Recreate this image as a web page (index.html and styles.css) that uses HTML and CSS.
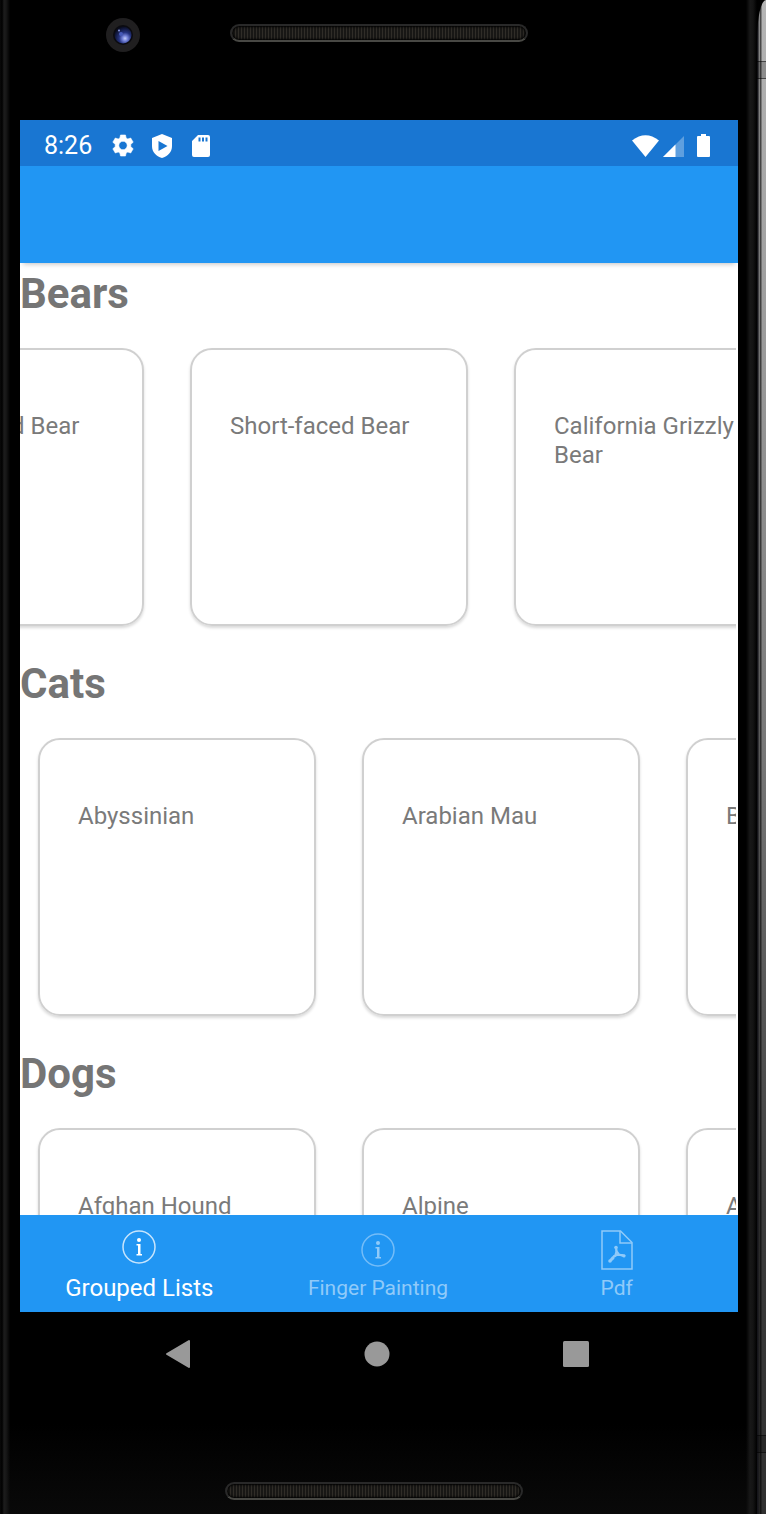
FILE: index.html
```html
<!DOCTYPE html>
<html lang="en">
<head>
<meta charset="utf-8">
<meta name="viewport" content="width=device-width, initial-scale=1">
<title>Grouped Lists</title>
<link rel="stylesheet" href="styles.css">
</head>
<body>
<div class="device">
  <div class="edge edge-left"></div>
  <div class="front">
    <div class="bezel-top">
      <svg class="camera" viewBox="0 0 34 34" aria-hidden="true">
        <defs>
          <radialGradient id="lens" cx="62%" cy="70%" r="70%">
            <stop offset="0" stop-color="#c3cdf8"/>
            <stop offset=".22" stop-color="#7482d8"/>
            <stop offset=".5" stop-color="#25337f"/>
            <stop offset="1" stop-color="#080b1c"/>
          </radialGradient>
        </defs>
        <circle cx="17" cy="17" r="17" fill="#201f20"/>
        <circle cx="17" cy="17" r="10" fill="#0b0b10"/>
        <circle cx="17" cy="17" r="8.500" fill="url(#lens)"/>
        <circle cx="15" cy="16" r="2" fill="#4659b8"/>
        <circle cx="13" cy="12.500" r="1" fill="#8e9ae0"/>
      </svg>
      <div class="speaker"></div>
    </div>
    <div class="screen">
      <div class="status">
        <span class="clock">8:26</span>
        <svg class="icon" viewBox="0 0 22 24" aria-hidden="true"><path fill="#fff" fill-rule="evenodd" stroke="#fff" stroke-width=".6" stroke-linejoin="round" d="M8.500 1h5l.6 3 1.700 1 2.900-1 2.500 4.200-2.400 2.100v2.400l2.400 2.100-2.500 4.200-2.900-1-1.700 1-.6 3h-5l-.6-3-1.700-1-2.900 1L.8 14.800l2.400-2.100v-2.400L.8 8.200 3.300 4l2.900 1 1.700-1zM11 7.300a4.200 4.200 0 1 0 0 8.400 4.200 4.200 0 0 0 0-8.400z"/></svg>
        <svg class="icon" viewBox="0 0 22 24" aria-hidden="true"><path fill="#fff" fill-rule="evenodd" d="M11 0l10 4v8c0 6-4 10-10 12C5 22 1 18 1 12V4zM7.500 7v10l9-5z"/></svg>
        <svg class="icon" viewBox="0 0 22 24" aria-hidden="true"><path fill="#fff" fill-rule="evenodd" d="M8 1h10q2 0 2 2v18q0 2-2 2H4q-2 0-2-2V7zM8.500 3.500v4h2v-4zm3.500 0v4h2v-4zm3.500 0v4h2v-4z"/></svg>
        <div class="signals">
          <svg class="wifi" viewBox="0 0 27 22" aria-hidden="true"><path fill="#fff" d="M0 5.500Q13.500-5 27 5.500L13.500 22z"/></svg>
          <svg class="cell" viewBox="0 0 21 22" aria-hidden="true"><path fill="#fff" fill-opacity=".3" d="M21 1v21H0z"/><path fill="#fff" d="M12.500 9.500V22H0z"/></svg>
          <svg class="battery" viewBox="0 0 13 23" aria-hidden="true"><path fill="#fff" d="M4 0h5v2h3q1 0 1 1v19q0 1-1 1H1q-1 0-1-1V3q0-1 1-1h3z"/></svg>
        </div>
      </div>
      <header class="toolbar"></header>
      <main class="content">
        <section class="group">
          <h2 class="group-title">Bears</h2>
          <ul class="cards cards-scrolled">
            <li class="card">Spectacled Bear</li>
            <li class="card">Short-faced Bear</li>
            <li class="card">California Grizzly Bear</li>
          </ul>
        </section>
        <section class="group">
          <h2 class="group-title">Cats</h2>
          <ul class="cards">
            <li class="card">Abyssinian</li>
            <li class="card">Arabian Mau</li>
            <li class="card">Bengal</li>
          </ul>
        </section>
        <section class="group">
          <h2 class="group-title">Dogs</h2>
          <ul class="cards">
            <li class="card">Afghan Hound</li>
            <li class="card">Alpine Dachsbracke</li>
            <li class="card">American Bulldog</li>
          </ul>
        </section>
      </main>
      <nav class="tabs">
        <button class="tab tab-active" type="button">
          <svg class="tab-info" viewBox="0 0 34 34" aria-hidden="true"><circle cx="17" cy="17" r="16" fill="none" stroke="currentColor" stroke-opacity=".75" stroke-width="1.500"/><circle cx="17" cy="10" r="2" fill="currentColor"/><path fill="currentColor" d="M14.500 14h4v10h1.500v1.500h-5.500V24H16v-8.500h-1.500z"/></svg>
          <span>Grouped Lists</span>
        </button>
        <button class="tab" type="button">
          <svg class="tab-info" viewBox="0 0 34 34" aria-hidden="true"><circle cx="17" cy="17" r="16" fill="none" stroke="currentColor" stroke-opacity=".75" stroke-width="1.500"/><circle cx="17" cy="10" r="2" fill="currentColor"/><path fill="currentColor" d="M14.500 14h4v10h1.500v1.500h-5.500V24H16v-8.500h-1.500z"/></svg>
          <span>Finger Painting</span>
        </button>
        <button class="tab" type="button">
          <svg class="tab-pdf" viewBox="0 0 32 40" aria-hidden="true"><g fill="none" stroke="currentColor" stroke-width="1.500"><path d="M1 1h18.500L31 12.500V39H1z"/><path d="M19 1v12h12"/><g stroke-width="2" stroke-linecap="round" stroke-linejoin="round"><path d="M15 17.500q1 5-1 8.500-2 3.500-5 5M15 17.500q0 4 3 7M13 26q5-2 10.500-.5M9 31q2-4 6-5.500M18 24.500l4.500 1.500"/></g></g><g fill="currentColor"><circle cx="15" cy="17.500" r="1.800"/><circle cx="9" cy="31" r="1.800"/><circle cx="23" cy="26" r="1.500"/></g></svg>
          <span>Pdf</span>
        </button>
      </nav>
    </div>
    <div class="system-nav">
      <button class="system-button" type="button" aria-label="Back"><svg viewBox="0 0 28 30" aria-hidden="true"><path fill="#999" stroke="#999" stroke-width="2" stroke-linejoin="round" d="M25 2v26L3 15z"/></svg></button>
      <button class="system-button" type="button" aria-label="Home"><svg viewBox="0 0 28 30" aria-hidden="true"><circle cx="14" cy="15" r="12.500" fill="#999"/></svg></button>
      <button class="system-button" type="button" aria-label="Recent apps"><svg viewBox="0 0 28 30" aria-hidden="true"><rect x="1" y="2" width="26" height="26" rx="1.500" fill="#999"/></svg></button>
    </div>
    <div class="bezel-bottom"><div class="speaker"></div></div>
  </div>
  <div class="edge edge-right">
    <div class="rail">
      <div class="notch"></div>
      <div class="notch"></div>
    </div>
  </div>
</div>
</body>
</html>
```

FILE: styles.css
```css
* { box-sizing: border-box; }

body {
  margin: 0;
  background: #000;
  font-family: Roboto, "Liberation Sans", sans-serif;
}

button {
  border: 0;
  padding: 0;
  background: none;
  font: inherit;
}

svg { display: block; }

.device {
  display: flex;
  height: 100vh;
  background: linear-gradient(#000 94%, #090909);
}

.front {
  flex: 1;
  min-width: 0;
  display: flex;
  flex-direction: column;
}

.edge { flex: none; }

.edge-left {
  width: 20px;
  background: linear-gradient(90deg, #0a0a0a, #010101 2px, #1c1c1c 4px, #181818 6px, transparent 10px);
}

.edge-right {
  width: 28px;
  display: flex;
  justify-content: flex-end;
  background: linear-gradient(90deg, transparent 8px, #181818 12px, #141414 15px, #000 19px);
}

.rail {
  width: 9px;
  display: flex;
  flex-direction: column;
  justify-content: space-between;
  padding: 61px 0;
  border-top-left-radius: 9px 40px;
  background:
    linear-gradient(90deg, #15151a 1px, rgb(0 0 0 / 30%) 2px, rgb(0 0 0 / 20%) 3px, rgb(0 0 0 / 60%) 3px, rgb(0 0 0 / 60%) 4px, transparent 5px),
    linear-gradient(#b5b5b5, #989898 25%, #777 50%, #3c3c3c 80%, #303030);
}

.notch {
  height: 18px;
  border: solid rgb(0 0 0 / 50%);
  border-width: 1px 0;
  background: rgb(0 0 0 / 20%);
}

.bezel-top {
  height: 120px;
  display: grid;
  grid-template-columns: 1fr 298px 1fr;
  align-items: start;
  padding-top: 18px;
}

.camera {
  width: 34px;
  height: 34px;
  margin-left: 86px;
}

.speaker {
  width: 298px;
  height: 18px;
  margin-top: 6px;
  border: 2px solid #292929;
  border-bottom-color: #484844;
  border-radius: 9px;
  background: repeating-linear-gradient(90deg, #302d28 0, #302d28 1px, #181715 1px, #181715 3px);
  box-shadow: inset 0 0 2px 1px #000;
}

.screen {
  flex: 1;
  min-height: 0;
  display: flex;
  flex-direction: column;
  background: #fff;
}

.status {
  height: 46px;
  display: flex;
  align-items: center;
  gap: 17px;
  padding: 5px 28px 0 24px;
  background: #1976d2;
  color: #fff;
}

.clock {
  margin-right: 3px;
  font-size: 25px;
  line-height: 26px;
}

.icon {
  width: 22px;
  height: 24px;
}

.signals {
  display: flex;
  align-items: center;
  margin-left: auto;
}

.wifi { width: 27px; height: 22px; margin-right: 4px; }
.cell { width: 21px; height: 22px; margin-right: 13px; }
.battery { width: 13px; height: 23px; }

.toolbar {
  position: relative;
  height: 97px;
  background: #2196f3;
  box-shadow: 0 4px 5px -3px rgb(0 0 0 / 25%);
}

.content {
  flex: 1;
  min-height: 0;
  margin-right: 2px;
  overflow: hidden;
}

.group-title {
  margin: 0;
  padding-top: 1px;
  font-size: 42px;
  line-height: 60px;
  color: #757575;
}

.cards {
  display: flex;
  gap: 46px;
  margin: 0;
  padding: 24px 18px 27px;
  list-style: none;
}

.cards-scrolled { margin-left: -172px; }

.card {
  flex: none;
  width: 278px;
  height: 278px;
  padding: 62px 38px;
  border: 2px solid #d0d0d0;
  border-radius: 22px;
  box-shadow: 0 2px 3px rgb(0 0 0 / 15%);
  font-size: 24px;
  line-height: 29px;
  color: #7a7a7a;
}

.tabs {
  height: 97px;
  flex: none;
  display: grid;
  grid-template-columns: repeat(3, 1fr);
  padding-right: 2px;
  background: #2196f3;
}

.tab {
  display: flex;
  flex-direction: column;
  align-items: center;
  justify-content: flex-end;
  gap: 7px;
  padding-bottom: 10px;
  font-size: 21px;
  line-height: 28px;
  color: #90caf9;
}

.tab-active {
  font-size: 24px;
  color: #fff;
  gap: 10px;
}

.tab-info { width: 34px; height: 34px; }
.tab-pdf { width: 32px; height: 40px; }
.tab:last-child { gap: 4px; }

.system-nav {
  height: 84px;
  flex: none;
  display: flex;
  justify-content: space-between;
  align-items: center;
  padding: 0 148px 0 144px;
}

.system-button svg { width: 28px; height: 30px; }

.bezel-bottom {
  height: 118px;
  flex: none;
  display: flex;
  justify-content: center;
  align-items: flex-end;
  padding: 0 10px 14px 0;
}
```
